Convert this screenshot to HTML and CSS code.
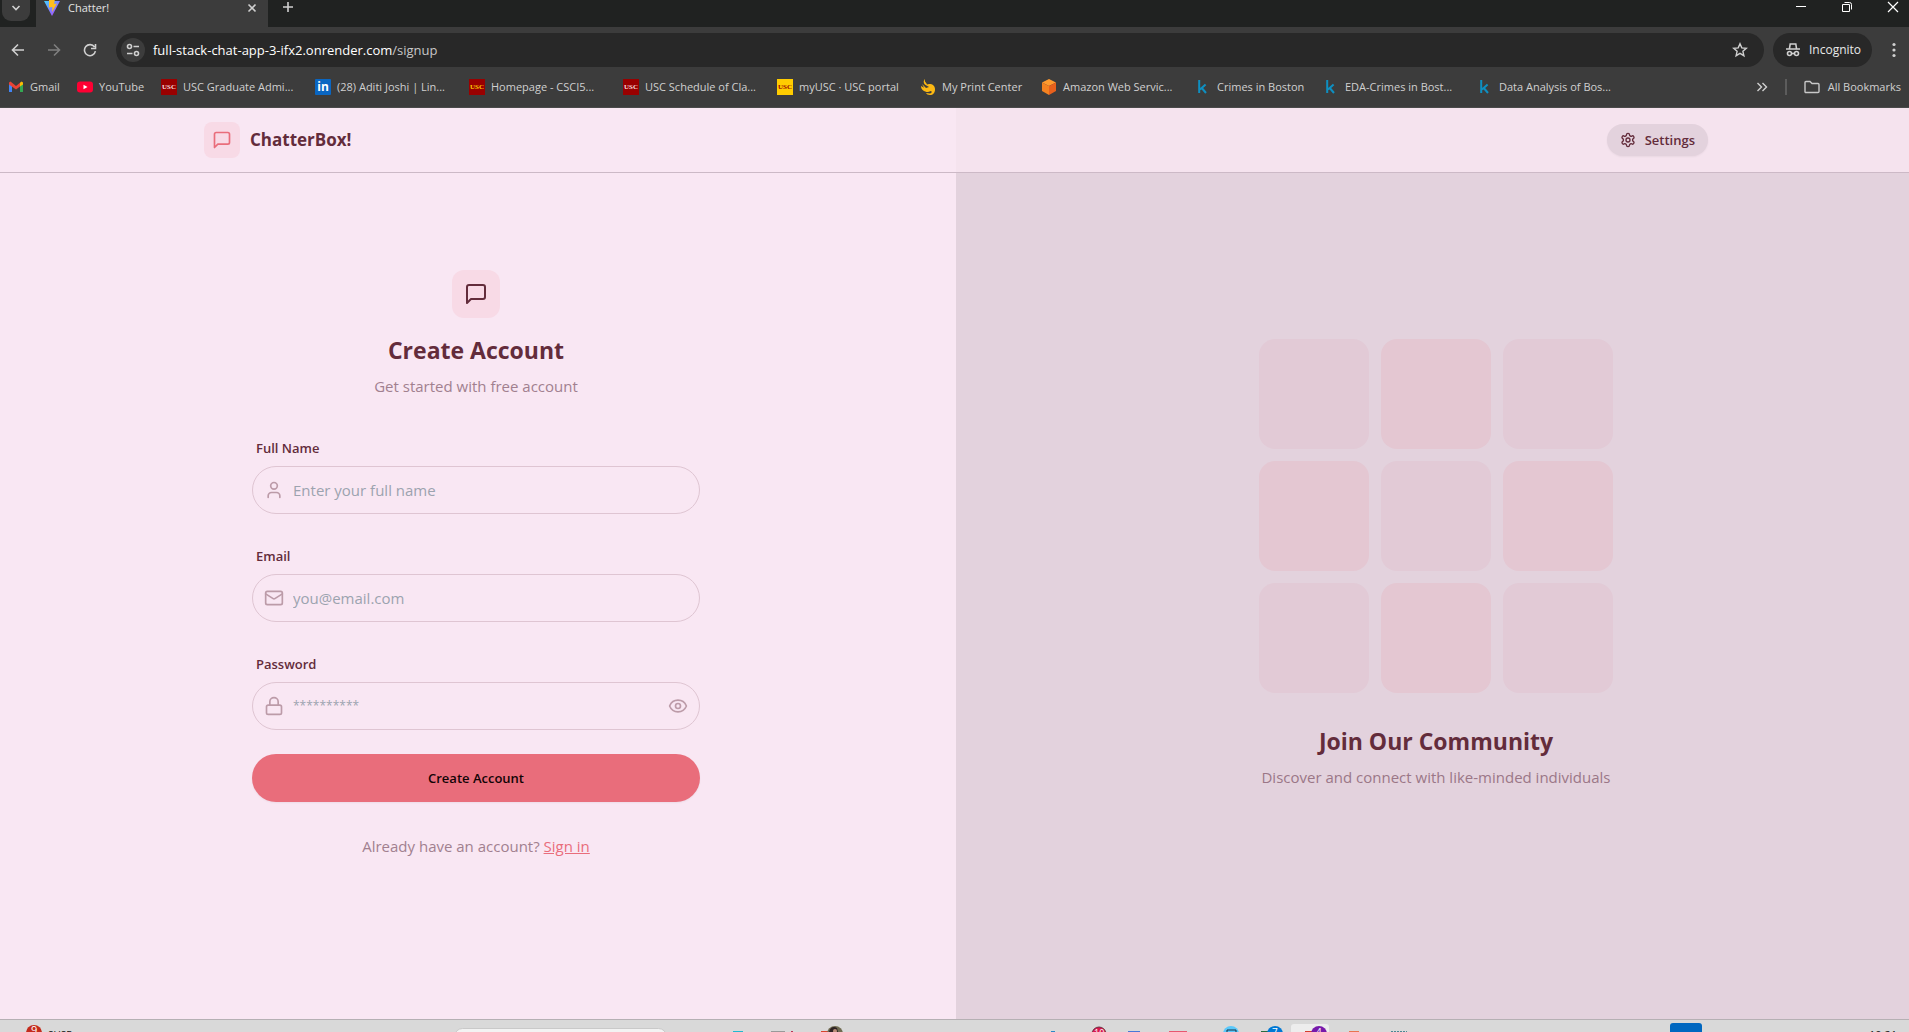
FILE: index.html
```html
<!DOCTYPE html>
<html lang="en">
<head>
<meta charset="utf-8">
<title>Chatter!</title>
<link rel="stylesheet" href="styles.css">
</head>
<body>
<svg class="defs" aria-hidden="true">
  <symbol id="chat" viewBox="0 0 24 24"><path d="M21 15a2 2 0 0 1-2 2H7l-4 4V5a2 2 0 0 1 2-2h14a2 2 0 0 1 2 2z"/></symbol>
  <symbol id="kaggle" viewBox="0 0 16 16"><path d="M4.200 1v13M10.600 5.400 5 10.600M6.800 9l4.200 5" fill="none" stroke="#0e8fc1" stroke-width="2"/></symbol>
</svg>

<header class="browser">
  <div class="tabstrip">
    <button class="tab-search" aria-label="Search tabs"><svg width="10" height="10" viewBox="0 0 10 10"><path d="m1.500 3 3.500 3.500L8.500 3"/></svg></button>
    <div class="tab">
      <svg width="16" height="16" viewBox="0 0 16 16"><defs><linearGradient id="v" x1="0" y1="0" x2="1" y2="1"><stop offset="0" stop-color="#41d1ff"/><stop offset="1" stop-color="#bd34fe"/></linearGradient></defs><path d="M0 1h16L8 16z" fill="url(#v)"/><path d="m5 0 6-1-1 5 3-.4L8 12l.4-5L5 7.500z" fill="#ffbf1f"/></svg>
      <span class="tab-title">Chatter!</span>
      <button class="plain" aria-label="Close tab"><svg width="10" height="10" viewBox="0 0 10 10"><path d="m1.500 1.500 7 7m0-7-7 7"/></svg></button>
    </div>
    <button class="plain new-tab" aria-label="New tab"><svg width="12" height="12" viewBox="0 0 12 12"><path d="M6 1v10M1 6h10"/></svg></button>
    <div class="window-buttons">
      <button class="plain" aria-label="Minimize"><svg width="12" height="12" viewBox="0 0 12 12"><path d="M1 5.500h10" stroke-width="1"/></svg></button>
      <button class="plain" aria-label="Restore"><svg width="12" height="12" viewBox="0 0 12 12"><path d="M1.500 3.500h7v7h-7zM3.500 1.500h5a2 2 0 0 1 2 2v5" stroke-width="1"/></svg></button>
      <button class="plain" aria-label="Close"><svg width="12" height="12" viewBox="0 0 12 12"><path d="m1 1 10 10M11 1 1 11" stroke-width="1.200"/></svg></button>
    </div>
  </div>

  <div class="toolbar">
    <button class="plain nav-icon" aria-label="Back"><svg width="14" height="14" viewBox="0 0 14 14"><path d="M13 7H2m5-5.500L1.500 7 7 12.500"/></svg></button>
    <button class="plain nav-icon dim" aria-label="Forward"><svg width="14" height="14" viewBox="0 0 14 14"><path d="M1 7h11M7 1.500 12.500 7 7 12.500"/></svg></button>
    <button class="plain nav-icon" aria-label="Reload"><svg width="14" height="14" viewBox="0 0 14 14"><path d="M12.400 8.200A5.500 5.500 0 1 1 11.500 4M12.500 1v4.500H8"/></svg></button>
    <div class="omnibox">
      <button class="site-info" aria-label="Site information"><svg width="14" height="14" viewBox="0 0 14 14"><circle cx="3.500" cy="3.500" r="2"/><path d="M7.500 3.500H13M1 10.500h5.500"/><circle cx="10.500" cy="10.500" r="2"/></svg></button>
      <div class="url">full-stack-chat-app-3-ifx2.onrender.com<span>/signup</span></div>
      <button class="plain" aria-label="Bookmark this tab"><svg width="16" height="16" viewBox="0 0 16 16"><path d="m8 1.800 1.800 4.100 4.500.4-3.400 3 1 4.400L8 11.400l-3.900 2.300 1-4.400-3.400-3 4.500-.4z" stroke-width="1.400"/></svg></button>
    </div>
    <div class="incognito">
      <svg width="16" height="16" viewBox="0 0 16 16"><path d="M4.500 6.500 5.200 2h5.600l.7 4.500M1 7h14" /><circle cx="4.500" cy="11.500" r="2"/><circle cx="11.500" cy="11.500" r="2"/><path d="M6.500 11.500h3"/></svg>
      <span>Incognito</span>
    </div>
    <button class="plain menu" aria-label="Menu"><svg width="4" height="16" viewBox="0 0 4 16"><g fill="#d0d0d0" stroke="none"><circle cx="2" cy="2.500" r="1.600"/><circle cx="2" cy="8" r="1.600"/><circle cx="2" cy="13.500" r="1.600"/></g></svg></button>
  </div>

  <nav class="bookmarks" aria-label="Bookmarks">
    <div class="bookmark-list">
      <a href="#"><svg viewBox="0 0 16 16"><path d="M1 4v9h3V6.500z" fill="#4285f4"/><path d="M15 4v9h-3V6.500z" fill="#34a853"/><path d="M1 3.500 2.500 2.500 8 7l4-3.200v3.600L8 10.600 1 5.500z" fill="#ea4335"/><path d="m12 3.800 1.500-1.200L15 3.500v2L12 7.600z" fill="#fbbc04"/></svg><span>Gmail</span></a>
      <a href="#"><svg viewBox="0 0 16 16"><rect y="2.500" width="16" height="11" rx="3" fill="#ff0033"/><path d="m6.500 5.700 4 2.300-4 2.300z" fill="#fff"/></svg><span>YouTube</span></a>
      <a href="#"><b class="usc">USC</b><span>USC Graduate Admi...</span></a>
      <a href="#"><b class="linkedin">in</b><span>(28) Aditi Joshi | Lin...</span></a>
      <a href="#"><b class="usc usc-yellow">USC</b><span>Homepage - CSCI5...</span></a>
      <a href="#"><b class="usc">USC</b><span>USC Schedule of Cla...</span></a>
      <a href="#"><b class="usc usc-gold">USC</b><span>myUSC · USC portal</span></a>
      <a href="#"><svg viewBox="0 0 16 16"><path d="M5 0c-1 3 2 4 2 5.500L9 5c4 0 6 2 6 5.500 0 3.500-2 5.500-5 5.500-2 0-3.500-.8-4-2l4 .5c2-.5 2-2 1-2.500L8 13C4 13 1 10.500 1 7l3 1.800L2 5l4 4 3-1-3.500-2C3 4 3.500 1.500 5 0z" fill="#fcb813"/></svg><span>My Print Center</span></a>
      <a href="#"><svg viewBox="0 0 16 16"><path d="m8 0 7 3.500L8 7 1 3.500z" fill="#ff9a2e"/><path d="M1 3.500 8 7v9l-7-4z" fill="#f58220"/><path d="M15 3.500 8 7v9l7-4z" fill="#e8601c"/></svg><span>Amazon Web Servic...</span></a>
      <a href="#"><svg><use href="#kaggle"/></svg><span>Crimes in Boston</span></a>
      <a href="#"><svg><use href="#kaggle"/></svg><span>EDA-Crimes in Bost...</span></a>
      <a href="#"><svg><use href="#kaggle"/></svg><span>Data Analysis of Bos...</span></a>
    </div>
    <button class="plain" aria-label="More bookmarks"><svg width="12" height="12" viewBox="0 0 12 12"><path d="m1.500 2 4 4-4 4m5-8 4 4-4 4" stroke-width="1.400"/></svg></button>
    <i class="divider"></i>
    <a class="all" href="#"><svg viewBox="0 0 16 16"><path d="M1 13V3.500a1 1 0 0 1 1-1h4l2 2h6a1 1 0 0 1 1 1V12.500a1 1 0 0 1-1 1H1.500z" fill="none" stroke="#c8c8c8" stroke-width="1.400"/></svg><span>All Bookmarks</span></a>
  </nav>
</header>

<div class="app">
  <header class="navbar">
    <div class="navbar-inner">
      <a class="brand" href="#"><span class="brand-icon"><svg width="20" height="20"><use href="#chat"/></svg></span><strong>ChatterBox!</strong></a>
      <button class="settings"><svg width="16" height="16" viewBox="0 0 24 24"><path d="M12.220 2h-.44a2 2 0 0 0-2 2v.18a2 2 0 0 1-1 1.730l-.43.25a2 2 0 0 1-2 0l-.15-.08a2 2 0 0 0-2.730.73l-.22.38a2 2 0 0 0 .73 2.730l.15.1a2 2 0 0 1 1 1.720v.51a2 2 0 0 1-1 1.740l-.15.09a2 2 0 0 0-.73 2.730l.22.38a2 2 0 0 0 2.730.73l.15-.08a2 2 0 0 1 2 0l.43.25a2 2 0 0 1 1 1.730V20a2 2 0 0 0 2 2h.44a2 2 0 0 0 2-2v-.18a2 2 0 0 1 1-1.730l.43-.25a2 2 0 0 1 2 0l.15.08a2 2 0 0 0 2.730-.73l.22-.39a2 2 0 0 0-.73-2.730l-.15-.08a2 2 0 0 1-1-1.740v-.5a2 2 0 0 1 1-1.740l.15-.09a2 2 0 0 0 .73-2.730l-.22-.38a2 2 0 0 0-2.730-.73l-.15.08a2 2 0 0 1-2 0l-.43-.25a2 2 0 0 1-1-1.730V4a2 2 0 0 0-2-2z"/><circle cx="12" cy="12" r="3"/></svg><span>Settings</span></button>
    </div>
  </header>

  <main class="signup">
    <div class="signup-inner">
      <div class="intro">
        <span class="intro-icon"><svg width="24" height="24"><use href="#chat"/></svg></span>
        <h1>Create Account</h1>
        <p>Get started with free account</p>
      </div>
      <form>
        <div class="field">
          <label for="name">Full Name</label>
          <div class="control">
            <svg class="lead" viewBox="0 0 24 24"><path d="M19 21v-2a4 4 0 0 0-4-4H9a4 4 0 0 0-4 4v2"/><circle cx="12" cy="7" r="4"/></svg>
            <input id="name" type="text" placeholder="Enter your full name">
          </div>
        </div>
        <div class="field">
          <label for="email">Email</label>
          <div class="control">
            <svg class="lead" viewBox="0 0 24 24"><rect x="2" y="4" width="20" height="16" rx="2"/><path d="m22 7-8.970 5.700a1.940 1.940 0 0 1-2.060 0L2 7"/></svg>
            <input id="email" type="email" placeholder="you@email.com">
          </div>
        </div>
        <div class="field">
          <label for="password">Password</label>
          <div class="control">
            <svg class="lead" viewBox="0 0 24 24"><rect x="3" y="11" width="18" height="11" rx="2"/><path d="M7 11V7a5 5 0 0 1 10 0v4"/></svg>
            <input id="password" type="password" placeholder="**********">
            <button type="button" class="reveal" aria-label="Show password"><svg width="20" height="20" viewBox="0 0 24 24"><path d="M2.060 12.350a1 1 0 0 1 0-.7 10.750 10.750 0 0 1 19.880 0 1 1 0 0 1 0 .7 10.750 10.750 0 0 1-19.880 0"/><circle cx="12" cy="12" r="3"/></svg></button>
          </div>
        </div>
        <button class="submit" type="submit">Create Account</button>
      </form>
      <p class="signin">Already have an account? <a href="#">Sign in</a></p>
    </div>
  </main>

  <aside class="community">
    <div class="community-inner">
      <div class="tiles"><i></i><i></i><i></i><i></i><i></i><i></i><i></i><i></i><i></i></div>
      <h2>Join Our Community</h2>
      <p>Discover and connect with like-minded individuals</p>
    </div>
  </aside>
</div>

<footer class="taskbar">
  <svg width="1909" height="12">
    <circle cx="34" cy="13" r="8" fill="#c42b1c"/><text x="31" y="14" fill="#fff" font-size="11">9</text>
    <text x="48" y="19" fill="#111" font-size="10">SUSE</text>
    <rect x="454.500" y="8.500" width="212" height="30" rx="8" fill="#f3f3f3" stroke="#c9c9c9"/>
    <path d="M733 12v-1h10v1z" fill="#22b8d0"/><path d="M771 12v-1h14v1z" fill="#999"/><path d="M791 12v-1h2v1z" fill="#b35"/>
    <path d="M821 12v-1h10v1z" fill="#d9432e"/><circle cx="835" cy="14" r="8" fill="#6f6a50"/><path d="M829 12c1-5 5-6 8-4l1 4z" fill="#2e2324"/><circle cx="835" cy="11" r="2" fill="#b98d78"/>
    <path d="M1051 12v-1h4v1z" fill="#2b88c8"/>
    <circle cx="1099" cy="14" r="7" fill="#d8194f" stroke="#6b3040"/><text x="1094" y="16" fill="#fff" font-size="9">10</text>
    <path d="M1128 12v-1h12v1z" fill="#4978d8"/><path d="M1169 12v-1h18v1z" fill="#e8576f"/>
    <circle cx="1231" cy="14" r="8" fill="#5ac8fa"/><path d="M1227 12v-2h9v2" fill="none" stroke="#173344"/>
    <path d="M1261 12v-1h8v1z" fill="#2a6b3f"/><circle cx="1275" cy="14" r="8" fill="#0078d4"/><text x="1272" y="16" fill="#fff" font-size="10">7</text>
    <rect x="1291" y="4" width="38" height="40" rx="3" fill="#ededed"/><path d="M1305 12v-1h8v1z" fill="#d43c2e"/><circle cx="1319" cy="14" r="8" fill="#7719aa"/><text x="1316" y="16" fill="#fff" font-size="10">4</text>
    <path d="M1349 12v-1h10v1z" fill="#e97451"/><path d="M1391 11.500h16" stroke="#4e8794" stroke-dasharray="2 1"/>
    <rect x="1670" y="3" width="32" height="32" rx="3" fill="#0067c0"/>
    <text x="1869" y="19" fill="#111" font-size="11">10:21</text>
  </svg>
</footer>
</body>
</html>
```
FILE: styles.css
```css
* { box-sizing: border-box; }
body {
  margin: 0;
  min-height: 100vh;
  display: flex;
  flex-direction: column;
  overflow: hidden;
  font-family: "Open Sans", "Noto Sans", sans-serif;
  font-size: 15px;
  line-height: 24px;
  color: #632c3b;
}
h1, h2, p { margin: 0; }
button, input { font: inherit; color: inherit; }
button { border: 0; padding: 0; }
a { color: inherit; text-decoration: none; }
svg { flex: none; display: block; }
.defs { position: absolute; width: 0; height: 0; }

/* Browser window */
.browser { background: #3c3c3c; color: #d0d0d0; font-size: 12px; line-height: 16px; border-bottom: 1px solid #4a4a4a; }
.browser button svg, .incognito svg { fill: none; stroke: #d0d0d0; stroke-width: 1.6; }
.plain { background: none; display: flex; align-items: center; justify-content: center; }
.tabstrip { display: flex; height: 27px; background: #202221; align-items: flex-start; }
.tab-search { width: 28px; height: 21px; margin: 0 6px 0 2px; padding-bottom: 6px; background: #3c3c3c; border-radius: 0 0 9px 9px; display: flex; align-items: center; justify-content: center; }
.tab { width: 232px; height: 27px; padding: 0 11px 12px 8px; display: flex; align-items: center; gap: 8px; background: #3c3c3c; }
.tab-title { flex: 1; color: #e3e3e3; font-size: 11px; }
.new-tab { width: 40px; height: 14px; }
.window-buttons { margin-left: auto; display: flex; gap: 34px; padding: 1px 10px 0 0; }
.window-buttons button svg { stroke: #fff; }
.toolbar { display: flex; align-items: center; padding: 6px 13px 6px 11px; }
.nav-icon { width: 14px; margin-right: 22px; }
.nav-icon + .nav-icon + .nav-icon { margin-right: 19px; }
.dim { opacity: .45; }
.omnibox { flex: 1; height: 34px; padding: 0 16px 0 5px; border-radius: 17px; background: #282828; display: flex; align-items: center; gap: 8px; }
.site-info { width: 24px; height: 24px; border-radius: 50%; background: #3c3c3c; display: flex; align-items: center; justify-content: center; }
.url { flex: 1; font-size: 13px; color: #fff; }
.url span { color: #c7c7c7; }
.incognito { width: 99px; height: 34px; margin: 0 20px 0 9px; padding-left: 12px; display: flex; align-items: center; gap: 8px; border-radius: 17px; background: #282828; color: #e8e8e8; }
.menu { width: 4px; }
.bookmarks { display: flex; align-items: center; height: 34px; padding: 0 8px 6px; font-size: 11px; }
.bookmark-list { flex: 1; display: grid; grid-template-columns: 69px 84px repeat(4, 154px) 143px 121px 154px 128px repeat(2, 154px); }
.bookmarks a { display: flex; align-items: center; gap: 6px; white-space: nowrap; }
.bookmarks a svg, .usc, .linkedin { flex: none; width: 16px; height: 16px; }
.usc { background: #990000; color: #f4dede; font: bold 7px/16px "Liberation Serif", serif; text-align: center; }
.usc-yellow { color: #ffcc00; }
.usc-gold { background: #ffcc00; color: #990000; }
.linkedin { background: #0a66c2; color: #fff; border-radius: 1px; font-size: 12px; line-height: 15px; text-align: center; }
.divider { width: 2px; height: 16px; margin: 0 17px; background: #5c5c5c; }
.bookmarks .all { gap: 8px; }

/* Application; it runs slightly past both edges of the window */
.app { position: relative; flex: 1; display: grid; grid-template-columns: 1fr 1fr; margin: 0 -7px 0 -4px; background: #f9e7f3; }
.navbar { position: absolute; inset: 0 0 auto; background: rgba(249, 231, 243, .8); border-bottom: 1px solid #ccb9c6; }
.navbar-inner { max-width: 1536px; height: 64px; margin: 0 auto; padding: 0 16px; display: flex; align-items: center; justify-content: space-between; }
.brand { display: flex; align-items: center; gap: 10px; font-size: 17px; }
.brand-icon, .intro-icon { display: flex; align-items: center; justify-content: center; background: #f8dae6; }
.brand-icon { width: 36px; height: 36px; border-radius: 8px; color: #e96d7b; }
.app svg { fill: none; stroke: currentColor; stroke-width: 2; stroke-linecap: round; stroke-linejoin: round; }
.settings { height: 32px; padding: 0 13px; display: flex; align-items: center; gap: 9px; border-radius: 16px; background: #e3d2dd; box-shadow: 0 1px 2px rgba(0, 0, 0, .05); font-size: 13px; font-weight: 600; }
.signup, .community { display: flex; align-items: center; justify-content: center; }
.signup-inner { width: 448px; }
.intro { display: flex; flex-direction: column; align-items: center; gap: 8px; margin-bottom: 32px; }
.intro-icon { width: 48px; height: 48px; margin-bottom: 8px; border-radius: 12px; }
h1, h2 { font-size: 23px; line-height: 32px; font-weight: 700; }
.intro p, .signin, .community p { color: #a1808f; }
form { display: grid; gap: 24px; }
.field label { display: block; padding: 8px 4px; font-size: 13px; line-height: 20px; font-weight: 600; }
.control { position: relative; display: flex; }
.control input { width: 100%; height: 48px; padding: 0 40px; border: 1px solid #dfc5d2; border-radius: 24px; background: transparent; }
.control input::placeholder { color: #9ca3af; opacity: 1; }
.control input[type="password"] { font-size: 12px; }
.lead { position: absolute; left: 12px; top: 14px; width: 20px; height: 20px; opacity: .4; }
.reveal { position: absolute; right: 12px; top: 14px; background: none; opacity: .4; }
.submit { height: 48px; border-radius: 24px; background: #e96d7b; color: #130406; font-size: 13px; font-weight: 600; box-shadow: 0 1px 2px rgba(0, 0, 0, .05); }
.signin { margin-top: 32px; text-align: center; }
.signin a { color: #e96d7b; text-decoration: underline; }
.community { background: #e3d2dd; text-align: center; }
.tiles { display: grid; grid-template-columns: repeat(3, 110px); justify-content: center; gap: 12px; margin-bottom: 32px; }
.tiles i { aspect-ratio: 1; border-radius: 16px; background: #e2cad6; }
.tiles i:nth-child(even) { background: #e4c7d2; }
.community h2 { margin-bottom: 8px; }
.community p { color: #9b7787; }

.taskbar { height: 13px; overflow: hidden; border-top: 1px solid #b5b0b3; background: #d9d9d9; }
```
